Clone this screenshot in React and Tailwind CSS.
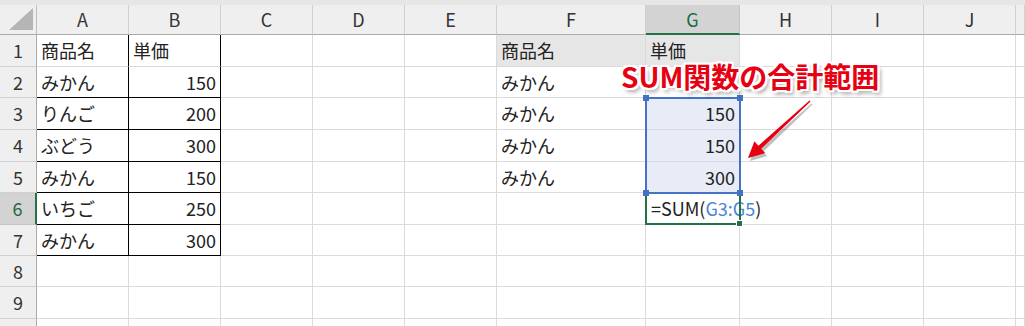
import React from "react";

const COLS = ["A", "B", "C", "D", "E", "F", "G", "H", "I", "J", ""];
const ROW_H = [
  "h-[32px]", "h-[31px]", "h-[32px]", "h-[32px]", "h-[31px]",
  "h-[32px]", "h-[31px]", "h-[31px]", "h-[32px]", "h-[32px]",
];

const data = {
  1: { A: "商品名", B: "単価", F: "商品名", G: "単価" },
  2: { A: "みかん", B: "150", F: "みかん" },
  3: { A: "りんご", B: "200", F: "みかん", G: "150" },
  4: { A: "ぶどう", B: "300", F: "みかん", G: "150" },
  5: { A: "みかん", B: "150", F: "みかん", G: "300" },
  6: { A: "いちご", B: "250" },
  7: { A: "みかん", B: "300" },
};

const isNum = (v) => /^\d+$/.test(v);

function DataCell({ r, c }) {
  const v = data[r] && data[r][c];
  const inTable = (c === "A" || c === "B") && r >= 1 && r <= 7;
  const right = inTable
    ? "border-r border-r-black"
    : "border-r border-r-[#dadada]";
  const bottom =
    inTable && r >= 2
      ? "border-b border-b-black"
      : "border-b border-b-[#dadada]";
  let bg = "bg-white";
  if (r === 1 && (c === "F" || c === "G")) bg = "bg-[#e7e6e6]";
  if (c === "G" && r >= 3 && r <= 5) bg = "bg-[#e8ecf7]";
  const bottomG =
    c === "G" && r >= 3 && r <= 4 ? "border-b border-b-[#d3d9e8]" : bottom;

  if (c === "G" && r === 3) {
    // reference range G3:G5 outline overlays these cells
    return (
      <div className={`${right} ${bottomG} ${bg} relative flex items-center justify-end pr-[4px] text-[18px] text-[#222]`}>
        {v}
        <div className="absolute -left-px -top-px w-[96px] h-[97px] border-2 border-[#4472c4] z-20 pointer-events-none">
          <div className="absolute -left-[4px] -top-[4px] w-[6px] h-[6px] bg-[#4472c4]" />
          <div className="absolute -right-[4px] -top-[4px] w-[6px] h-[6px] bg-[#4472c4]" />
          <div className="absolute -left-[4px] -bottom-[4px] w-[6px] h-[6px] bg-[#4472c4]" />
          <div className="absolute -right-[4px] -bottom-[4px] w-[6px] h-[6px] bg-[#4472c4]" />
        </div>
      </div>
    );
  }
  if (c === "G" && r === 6) {
    return (
      <div className={`${right} ${bottom} bg-white relative z-10 flex items-center pl-[5px] whitespace-nowrap text-[18px] text-[#222]`}>
        <span>=SUM(</span>
        <span className="text-[#4a86d6]">G3:G5</span>
        <span>)</span>
        <span className="inline-block w-px h-[21px] bg-black ml-[2px]" />
        <div className="absolute -left-px -top-px w-[96px] h-[33px] border-2 border-[#217346] pointer-events-none">
          <div className="absolute -right-[4px] -bottom-[4px] w-[7px] h-[7px] bg-[#217346] border border-white" />
        </div>
      </div>
    );
  }
  return (
    <div
      className={`${right} ${bottomG} ${bg} flex items-center whitespace-nowrap overflow-hidden text-[18px] text-[#222] ${
        v && isNum(v) ? "justify-end pr-[4px]" : "justify-start pl-[4px]"
      }`}
    >
      {v || ""}
    </div>
  );
}

export default function App() {
  const rows = [1, 2, 3, 4, 5, 6, 7, 8, 9, 10];
  return (
    <div className="relative w-[1025px] h-[326px] overflow-hidden bg-white font-['Noto_Sans_CJK_JP','Noto_Sans',sans-serif]">
      <div className="h-[5px] bg-[#e6e6e6]" />
      <div className="grid grid-cols-[37px_92px_92px_92px_92px_92px_149px_94px_92px_92px_92px_9px]">
        {/* header row */}
        <div className="h-[30px] bg-[#efefef] border-r border-r-[#bdbdbd] border-b border-b-[#ababab] flex items-end justify-end pr-[3px] pb-[4px]">
          <svg width="24" height="22" viewBox="0 0 24 22">
            <polygon points="24,0 24,22 0,22" fill="#b5b5b5" />
          </svg>
        </div>
        {COLS.map((c, i) =>
          c === "G" ? (
            <div key={i} className="h-[30px] bg-[#d3d3d3] border-r border-r-[#c4c4c4] border-b-2 border-b-[#217346] flex items-center justify-center text-[18px] text-[#1d6b43]">
              {c}
            </div>
          ) : (
            <div key={i} className="h-[30px] bg-[#efefef] border-r border-r-[#d0d0d0] border-b border-b-[#ababab] flex items-center justify-center text-[18px] text-[#333]">
              {c}
            </div>
          )
        )}
        {rows.map((r) => (
          <React.Fragment key={r}>
            {r === 6 ? (
              <div className={`${ROW_H[r - 1]} bg-[#d3d3d3] border-r-2 border-r-[#217346] border-b border-b-[#c4c4c4] flex items-center justify-center text-[18px] text-[#1d6b43]`}>
                {r}
              </div>
            ) : (
              <div className={`${ROW_H[r - 1]} bg-[#efefef] border-r border-r-[#ababab] border-b border-b-[#d0d0d0] flex items-center justify-center text-[18px] text-[#333]`}>
                {r < 10 ? r : ""}
              </div>
            )}
            {COLS.map((c, i) => (
              <DataCell key={i} r={r} c={c} />
            ))}
          </React.Fragment>
        ))}
      </div>

      {/* annotation callout */}
      <div className="absolute left-[621px] top-[62px] z-40 whitespace-nowrap text-[28px] leading-[28px] font-bold text-[#e60012] [text-shadow:2px_0_0_#fff,-2px_0_0_#fff,0_2px_0_#fff,0_-2px_0_#fff,2px_2px_0_#fff,-2px_-2px_0_#fff,2px_-2px_0_#fff,-2px_2px_0_#fff,3px_4px_4px_rgba(0,0,0,0.4)]">
        SUM関数の合計範囲
      </div>

      {/* arrow */}
      <svg className="absolute left-0 top-0 z-40 pointer-events-none" width="1025" height="326">
        <g transform="translate(2,3)" fill="rgba(0,0,0,0.25)">
          <polygon points="810.5,101.5 809.5,100.4 758.4,145.7 754.4,141.3 748,158 765.2,153.1 761.2,148.7" />
        </g>
        <polygon fill="#e60012" points="810.5,101.5 809.5,100.4 758.4,145.7 754.4,141.3 748,158 765.2,153.1 761.2,148.7" />
      </svg>
    </div>
  );
}
